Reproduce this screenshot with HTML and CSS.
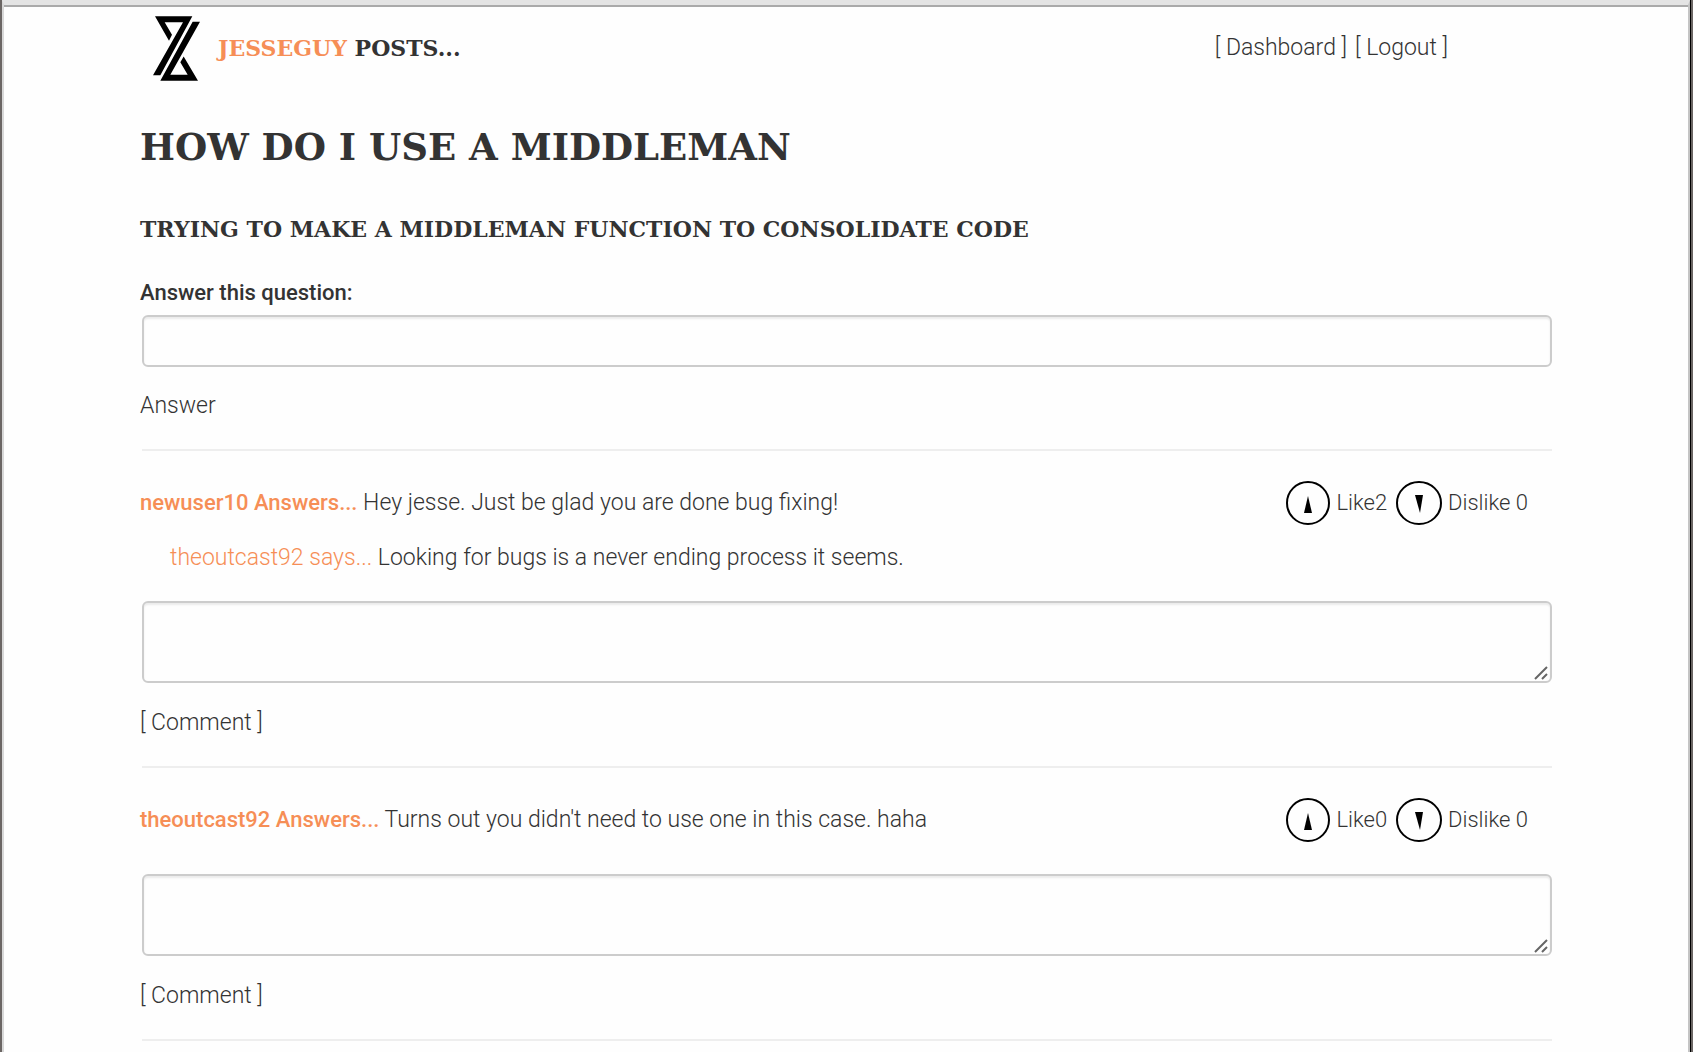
FILE: index.html
```html
<!DOCTYPE html>
<html lang="en">
<head>
<meta charset="utf-8">
<meta name="viewport" content="width=device-width, initial-scale=1">
<title>How do I use a Middleman</title>
<link rel="stylesheet" href="styles.css">
</head>
<body>
<div class="frame">
<div class="container">
  <header class="topbar">
    <svg class="logo" viewBox="0 0 141 194" aria-hidden="true">
      <path d="M6 0H118L22 177H0L90 18H35L57 56L48 74Z"/>
      <path d="M119 17H141L52 176H104L82 138L92 121L135 194H22Z"/>
    </svg>
    <p class="poster"><a class="user" href="#">Jesseguy</a> <span>posts...</span></p>
    <nav class="nav"><a href="#">[ Dashboard ]</a><a href="#">[ Logout ]</a></nav>
  </header>
  <main>
    <h1 class="title">How do I use a Middleman</h1>
    <h2 class="subtitle">Trying to make a middleman function to consolidate code</h2>
    <form class="answer-form">
      <label class="label" for="answer">Answer this question:</label>
      <input class="field" id="answer" type="text">
      <button class="text-button" type="button">Answer</button>
    </form>

    <article class="answer">
      <div class="answer-row">
        <p class="answer-text"><a class="user author" href="#">newuser10 Answers...</a> <span>Hey jesse. Just be glad you are done bug fixing!</span></p>
        <div class="votes">
          <button class="vote" type="button"><svg width="44" height="44" viewBox="0 0 44 44"><circle cx="22" cy="22" r="21"/><path d="M22 15L26 32H18Z"/></svg><span>Like2</span></button>
          <button class="vote" type="button"><svg width="46" height="44" viewBox="0 0 46 44"><ellipse cx="23" cy="22" rx="22" ry="21"/><path d="M19 14H27L24 32Z"/></svg><span>Dislike 0</span></button>
        </div>
      </div>
      <p class="reply"><a class="user" href="#">theoutcast92 says...</a> <span>Looking for bugs is a never ending process it seems.</span></p>
      <form class="comment-form">
        <div class="area-wrap">
          <textarea class="field area" aria-label="Comment on this answer"></textarea>
          <svg class="grip" width="14" height="14" viewBox="0 0 14 14"><path d="M1 13L13 1M8 13L13 8"/></svg>
        </div>
        <button class="text-button" type="button">[ Comment ]</button>
      </form>
    </article>

    <article class="answer">
      <div class="answer-row">
        <p class="answer-text"><a class="user author" href="#">theoutcast92 Answers...</a> <span>Turns out you didn't need to use one in this case. haha</span></p>
        <div class="votes">
          <button class="vote" type="button"><svg width="44" height="44" viewBox="0 0 44 44"><circle cx="22" cy="22" r="21"/><path d="M22 15L26 32H18Z"/></svg><span>Like0</span></button>
          <button class="vote" type="button"><svg width="46" height="44" viewBox="0 0 46 44"><ellipse cx="23" cy="22" rx="22" ry="21"/><path d="M19 14H27L24 32Z"/></svg><span>Dislike 0</span></button>
        </div>
      </div>
      <form class="comment-form">
        <div class="area-wrap">
          <textarea class="field area" aria-label="Comment on this answer"></textarea>
          <svg class="grip" width="14" height="14" viewBox="0 0 14 14"><path d="M1 13L13 1M8 13L13 8"/></svg>
        </div>
        <button class="text-button" type="button">[ Comment ]</button>
      </form>
    </article>
    <hr class="rule">
  </main>
</div>
</div>
</body>
</html>
```
FILE: styles.css
```css
* { box-sizing: border-box; }
body {
  margin: 0;
  background: #6b6664;
  color: #333;
  font: 300 23px/32px Roboto, sans-serif;
}
h1, h2, p { margin: 0; }
a { color: inherit; text-decoration: none; }
button {
  padding: 0;
  border: 0;
  background: none;
  color: inherit;
  font: inherit;
  cursor: pointer;
}
.frame {
  min-height: 100vh;
  margin: 0 3px 0 2px;
  background: #fefefe;
  border-top: 5px solid #e4e4e4;
  border-left: 2px solid #d8d8d8;
  border-right: 2px solid #c4c4c4;
  box-shadow: inset 0 2px #aaa, 1px 0 #000;
}
.container {
  max-width: 1412px;
  margin: 0 auto;
  padding-top: 10px;
}
.topbar {
  display: flex;
  align-items: center;
  height: 66px;
  padding: 0 104px 0 13px;
}
.logo { width: 47px; height: 65px; }
.poster {
  margin-left: 18px;
  font: 700 22px/32px "DejaVu Serif", serif;
  text-transform: uppercase;
}
.user { color: #f68e56; }
.nav { display: flex; gap: 8px; margin-left: auto; }
.title, .subtitle {
  font-family: "DejaVu Serif", serif;
  font-weight: 700;
  text-transform: uppercase;
}
.title { margin-top: 42px; font-size: 37px; line-height: 48px; }
.subtitle { margin-top: 42px; font-size: 22px; line-height: 32px; }
.answer-form { display: flex; flex-direction: column; align-items: flex-start; margin-top: 32px; }
.label { font-size: 22px; font-weight: 500; }
.field {
  display: block;
  width: calc(100% - 2px);
  height: 52px;
  margin: 0 0 0 2px;
  padding: 8px 12px;
  border: 2px solid #ccc;
  border-radius: 6px;
  outline: 0;
  background: #fefefe;
  box-shadow: inset 0 2px 2px rgba(0, 0, 0, 0.08);
  color: inherit;
  font: inherit;
}
.answer-form .field { margin-top: 6px; }
.text-button { display: block; margin-top: 24px; }
.answer-form .text-button { margin-top: 23px; }
.rule { height: 2px; margin: 27px 0 0 2px; border: 0; background: #eee; }
.answer { margin-top: 27px; }
.answer::before {
  content: "";
  display: block;
  height: 2px;
  margin: 0 0 30px 2px;
  background: #eee;
}
.answer-row {
  display: flex;
  align-items: center;
  justify-content: space-between;
  min-height: 44px;
}
.author { font-size: 22px; font-weight: 500; }
.votes { display: flex; gap: 9px; padding-right: 24px; font-size: 22px; }
.vote { display: flex; align-items: center; gap: 6px; }
.vote svg { display: block; fill: #000; }
.vote circle, .vote ellipse { fill: none; stroke: #000; stroke-width: 2; }
.reply { margin-top: 17px; padding-left: 30px; }
.comment-form { margin-top: 27px; }
.answer-row + .comment-form { margin-top: 32px; }
.area-wrap { position: relative; }
.area { height: 82px; resize: vertical; }
.area::-webkit-resizer { display: none; }
.grip {
  position: absolute;
  right: 4px;
  bottom: 3px;
  fill: none;
  stroke: #666;
  stroke-width: 2;
  pointer-events: none;
}
```
